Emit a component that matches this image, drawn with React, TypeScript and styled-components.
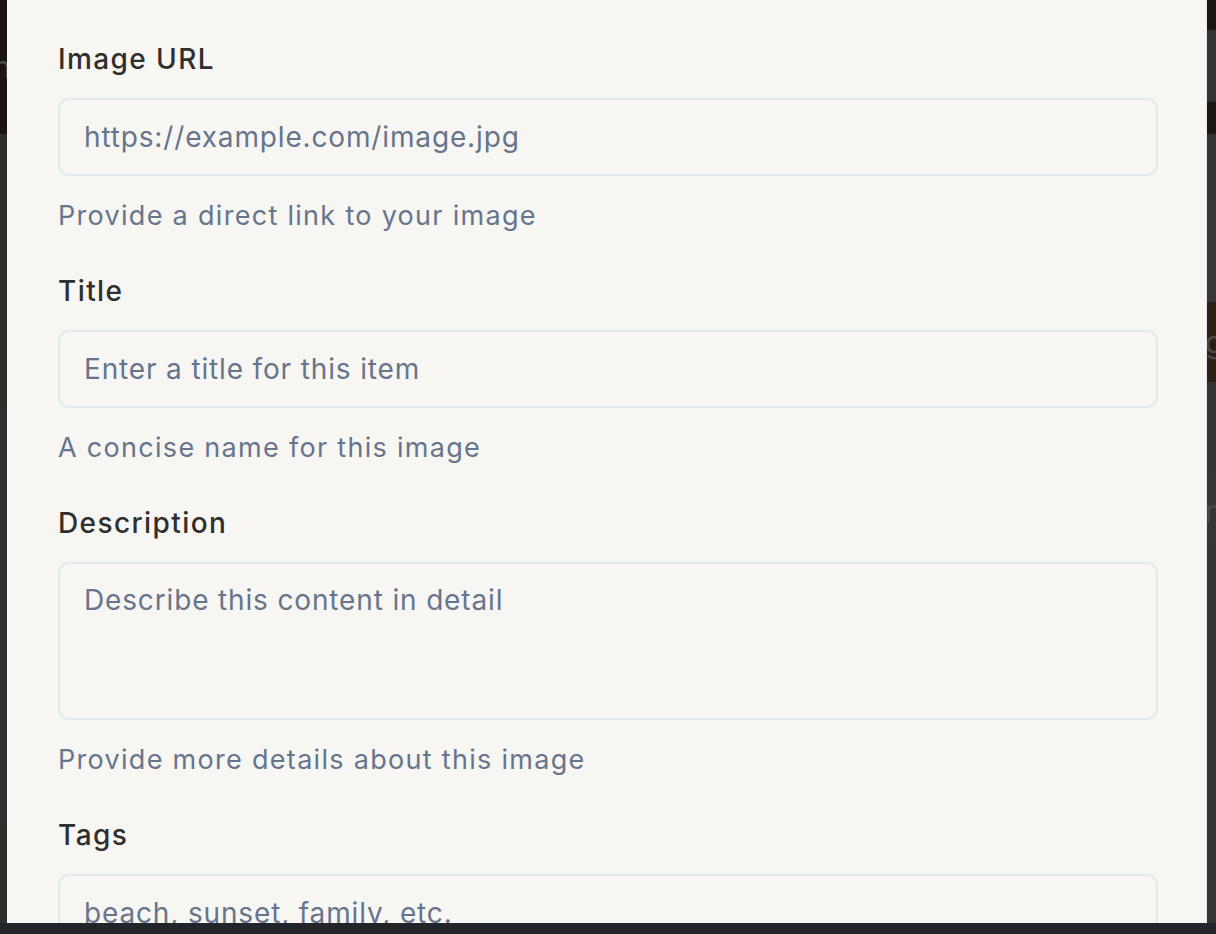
import { FC } from "react";
import styled, { createGlobalStyle } from "styled-components";

const GlobalStyle = createGlobalStyle`
  html, body {
    margin: 0;
    padding: 0;
    height: 100%;
    overflow: hidden;
    background: #22252a;
  }
  * {
    box-sizing: border-box;
  }
`;

const font = `"Inter", "Open Sans", "DejaVu Sans", sans-serif`;

const Page = styled.div`
  width: 1216px;
  height: 934px;
  display: flex;
  flex-direction: column;
  background: #22252a;
`;

const Behind = styled.div`
  flex: 0 0 923px;
  display: flex;
  flex-direction: row;
  justify-content: space-between;
  overflow: hidden;
`;

const Rail = styled.div<{ $width: number }>`
  flex: 0 0 ${(p) => p.$width}px;
  display: flex;
  flex-direction: column;
  overflow: hidden;
`;

const Band = styled.div<{ $h: number; $tone: string }>`
  flex: 0 0 ${(p) => p.$h}px;
  background: ${(p) => p.$tone};
  position: relative;
  overflow: hidden;
  font-family: ${font};
  font-size: 30px;
  color: #4a4a4a;
  line-height: ${(p) => p.$h}px;
`;

const Glyph = styled.span<{ $side: "left" | "right" }>`
  position: absolute;
  top: 0;
  ${(p) => (p.$side === "left" ? "right: -4px;" : "left: -2px;")}
`;

const BottomBar = styled.div`
  flex: 1 0 auto;
  background: #22252a;
`;

const Modal = styled.div`
  position: fixed;
  top: 0;
  left: 7px;
  width: 1200px;
  height: 923px;
  background: #f7f6f3;
  border-right: 1px solid #e3e6ec;
  padding: 38px 49px 0 51px;
  display: flex;
  flex-direction: column;
  gap: 35px;
  overflow: hidden;
`;

const Field = styled.div`
  display: flex;
  flex-direction: column;
`;

const Label = styled.label`
  font-family: ${font};
  font-weight: 460;
  font-size: 28px;
  line-height: 42px;
  letter-spacing: 1.4px;
  color: #2f2f2f;
  margin-bottom: 18px;
`;

const inputBase = `
  width: 1100px;
  border: 2px solid #e2e8f0;
  border-radius: 11px;
  background: transparent;
  font-family: ${font};
  font-size: 28px;
  letter-spacing: 0.85px;
  color: #2f2f2f;
  padding: 0 24px;
  outline: none;
  &::placeholder {
    color: #66758c;
    opacity: 1;
  }
`;

const TextInput = styled.input`
  ${inputBase}
  height: 78px;
`;

const TextArea = styled.textarea`
  ${inputBase}
  height: 158px;
  padding-top: 16px;
  line-height: 40px;
  resize: none;
`;

const Help = styled.p`
  margin: 21px 0 0;
  font-family: ${font};
  font-size: 27px;
  line-height: 38px;
  letter-spacing: 1.3px;
  color: #66758c;
`;

const leftBands = [
  { h: 134, tone: "#1a1510", glyph: "n" },
  { h: 273, tone: "#2e2e2e" },
  { h: 420, tone: "#302f2d" },
  { h: 96, tone: "#2e2e2e" },
];

const rightBands = [
  { h: 30, tone: "#1c1710" },
  { h: 72, tone: "#333333" },
  { h: 32, tone: "#1c1710" },
  { h: 66, tone: "#333333" },
  { h: 102, tone: "#373737" },
  { h: 80, tone: "#2e1f12", glyph: "g" },
  { h: 90, tone: "#333333" },
  { h: 78, tone: "#353535", glyph: "n" },
  { h: 330, tone: "#333333" },
  { h: 43, tone: "#353535" },
];

type FieldSpec = {
  id: string;
  label: string;
  placeholder: string;
  help?: string;
  multiline?: boolean;
};

const fields: FieldSpec[] = [
  {
    id: "url",
    label: "Image URL",
    placeholder: "https://example.com/image.jpg",
    help: "Provide a direct link to your image",
  },
  {
    id: "title",
    label: "Title",
    placeholder: "Enter a title for this item",
    help: "A concise name for this image",
  },
  {
    id: "description",
    label: "Description",
    placeholder: "Describe this content in detail",
    help: "Provide more details about this image",
    multiline: true,
  },
  {
    id: "tags",
    label: "Tags",
    placeholder: "beach, sunset, family, etc.",
  },
];

const FormField: FC<{ spec: FieldSpec }> = ({ spec }) => {
  const { id, label, placeholder, help, multiline } = spec;

  return (
    <Field>
      <Label htmlFor={id}>{label}</Label>
      {multiline ? (
        <TextArea id={id} placeholder={placeholder} />
      ) : (
        <TextInput id={id} type="text" placeholder={placeholder} />
      )}
      {help ? <Help>{help}</Help> : undefined}
    </Field>
  );
};

const App: FC = () => (
  <>
    <GlobalStyle />
    <Page>
      <Behind>
        <Rail $width={7}>
          {leftBands.map((b, i) => (
            <Band key={`l${i}`} $h={b.h} $tone={b.tone}>
              {b.glyph ? <Glyph $side="left">{b.glyph}</Glyph> : undefined}
            </Band>
          ))}
        </Rail>
        <Rail $width={9}>
          {rightBands.map((b, i) => (
            <Band key={`r${i}`} $h={b.h} $tone={b.tone}>
              {b.glyph ? <Glyph $side="right">{b.glyph}</Glyph> : undefined}
            </Band>
          ))}
        </Rail>
      </Behind>
      <BottomBar />
    </Page>
    <Modal role="dialog">
      {fields.map((spec) => (
        <FormField key={spec.id} spec={spec} />
      ))}
    </Modal>
  </>
);

export default App;
